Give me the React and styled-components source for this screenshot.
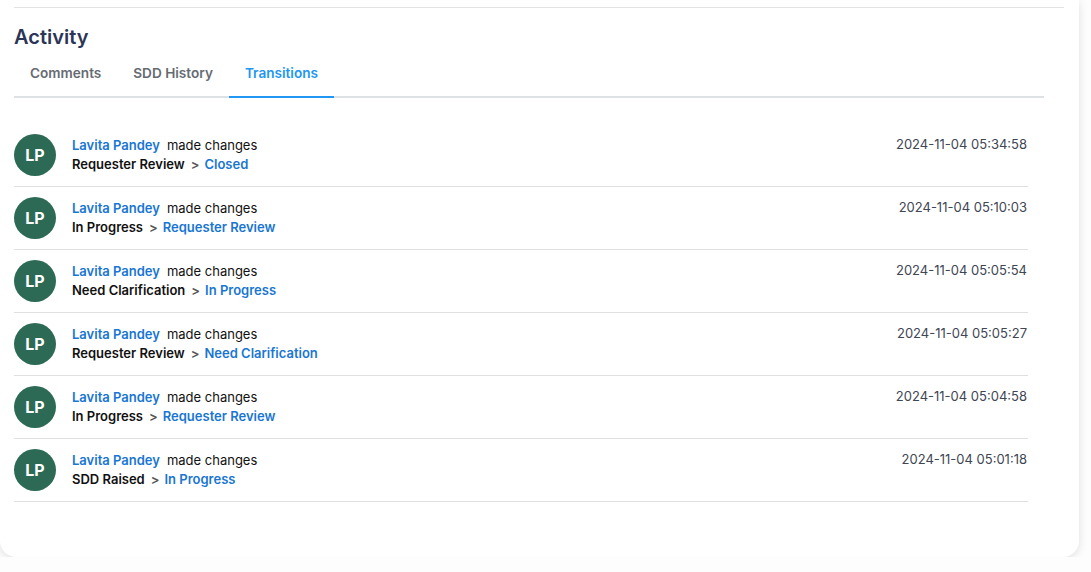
import React, { useState } from "react";
import styled, { createGlobalStyle } from "styled-components";

const GlobalStyle = createGlobalStyle`
  body {
    margin: 0;
    background: #fdfdfd;
    font-family: Inter, "Noto Sans", sans-serif;
  }
`;

const Card = styled.div`
  width: 1079px;
  height: 557px;
  box-sizing: border-box;
  background: #fff;
  border-radius: 0 0 16px 16px;
  box-shadow: 0 2px 10px rgba(0, 0, 0, 0.12);
  padding: 7px 15px 0 14px;
`;

const TopLine = styled.div`
  height: 1px;
  background: #e2e2e2;
`;

const Heading = styled.h2`
  margin: 17px 0 0;
  font-size: 20px;
  line-height: 24px;
  font-weight: 600;
  color: #2b3556;
`;

const TabBar = styled.div`
  display: flex;
  width: 1030px;
  margin-top: 1px;
  border-bottom: 2px solid #dee2e6;
`;

const Tab = styled.button`
  height: 48px;
  padding: 0 16px;
  margin-bottom: -2px;
  border: none;
  border-bottom: 2px solid ${(p) => (p.$active ? "#2196f3" : "transparent")};
  background: none;
  font-family: inherit;
  font-size: 13.6px;
  font-weight: 600;
  color: ${(p) => (p.$active ? "#2196f3" : "#666b73")};
  cursor: pointer;
`;

const List = styled.div`
  width: 1014px;
  margin-top: 26px;
`;

const Row = styled.div`
  display: flex;
  align-items: center;
  gap: 16px;
  padding: 10px 1px 10px 0;
  border-bottom: 1px solid #e0e0e0;
`;

const Avatar = styled.div`
  width: 42px;
  height: 42px;
  flex-shrink: 0;
  border-radius: 50%;
  background: #2d6a55;
  color: #fff;
  display: flex;
  align-items: center;
  justify-content: center;
  font-size: 16px;
  font-weight: 700;
`;

const Body = styled.div`
  flex: 1;
  font-size: 13px;
  line-height: 19px;
`;

const Name = styled.span`
  color: #1976d2;
  font-weight: 600;
  margin-right: 7px;
`;

const Plain = styled.span`
  color: #111;
`;

const From = styled.span`
  color: #111;
  font-weight: 600;
`;

const Arrow = styled.span`
  color: #555;
  margin: 0 5px 0 6px;
  font-weight: 600;
`;

const To = styled.span`
  color: #1976d2;
  font-weight: 600;
`;

const Time = styled.div`
  align-self: flex-start;
  margin-top: 1px;
  font-size: 13px;
  line-height: 19px;
  color: #404654;
`;

const transitions = [
  { from: "Requester Review", to: "Closed", at: "2024-11-04 05:34:58" },
  { from: "In Progress", to: "Requester Review", at: "2024-11-04 05:10:03" },
  { from: "Need Clarification", to: "In Progress", at: "2024-11-04 05:05:54" },
  { from: "Requester Review", to: "Need Clarification", at: "2024-11-04 05:05:27" },
  { from: "In Progress", to: "Requester Review", at: "2024-11-04 05:04:58" },
  { from: "SDD Raised", to: "In Progress", at: "2024-11-04 05:01:18" },
];

export default function App() {
  const [tab, setTab] = useState("Transitions");
  return (
    <>
      <GlobalStyle />
      <Card>
        <TopLine />
        <Heading>Activity</Heading>
        <TabBar>
          {["Comments", "SDD History", "Transitions"].map((t) => (
            <Tab key={t} $active={tab === t} onClick={() => setTab(t)}>
              {t}
            </Tab>
          ))}
        </TabBar>
        <List>
          {transitions.map((el, i) => (
            <Row key={i}>
              <Avatar>LP</Avatar>
              <Body>
                <div>
                  <Name>Lavita Pandey</Name>
                  <Plain>made changes</Plain>
                </div>
                <div>
                  <From>{el.from}</From>
                  <Arrow>&gt;</Arrow>
                  <To>{el.to}</To>
                </div>
              </Body>
              <Time>{el.at}</Time>
            </Row>
          ))}
        </List>
      </Card>
    </>
  );
}
